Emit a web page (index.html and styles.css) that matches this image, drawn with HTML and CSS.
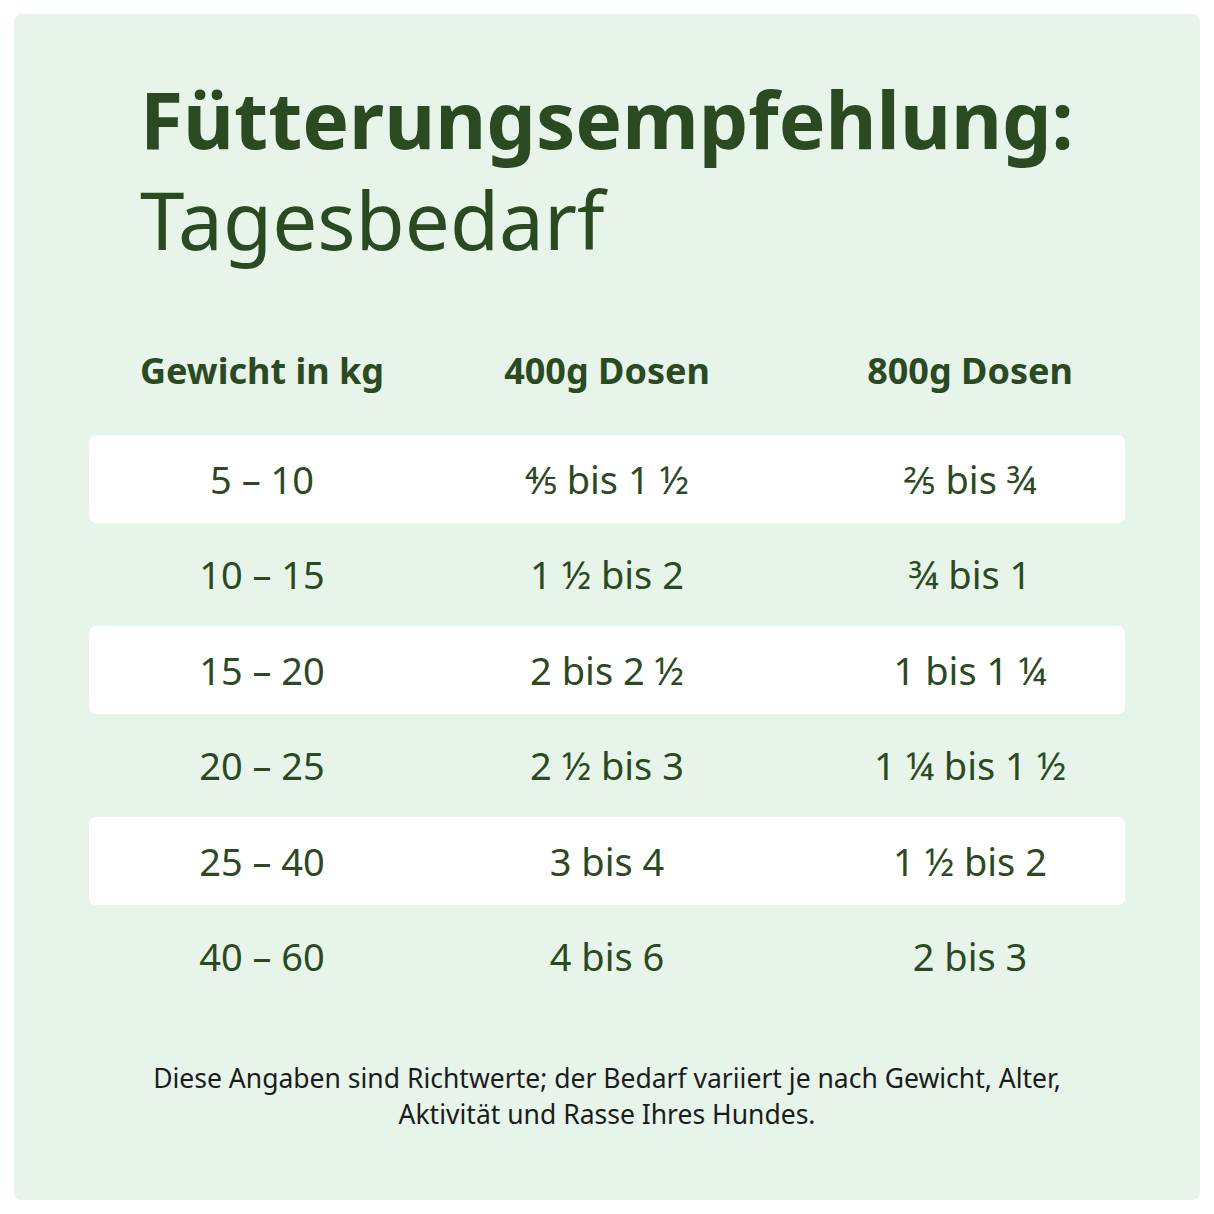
FILE: index.html
```html
<!DOCTYPE html>
<html lang="de">
<head>
<meta charset="utf-8">
<title>Fütterungsempfehlung</title>
<link rel="stylesheet" href="styles.css">
</head>
<body>
<div class="card">
  <h1 class="title"><span class="title-bold">Fütterungsempfehlung:</span><span class="title-light">Tagesbedarf</span></h1>
  <div class="table">
    <div class="row head">
      <div class="cell c1">Gewicht in kg</div>
      <div class="cell c2">400g Dosen</div>
      <div class="cell c3">800g Dosen</div>
    </div>
    <div class="row band">
      <div class="cell c1">5 – 10</div>
      <div class="cell c2">⅘ bis 1 ½</div>
      <div class="cell c3">⅖ bis ¾</div>
    </div>
    <div class="row">
      <div class="cell c1">10 – 15</div>
      <div class="cell c2">1 ½ bis 2</div>
      <div class="cell c3">¾ bis 1</div>
    </div>
    <div class="row band">
      <div class="cell c1">15 – 20</div>
      <div class="cell c2">2 bis 2 ½</div>
      <div class="cell c3">1 bis 1 ¼</div>
    </div>
    <div class="row">
      <div class="cell c1">20 – 25</div>
      <div class="cell c2">2 ½ bis 3</div>
      <div class="cell c3">1 ¼ bis 1 ½</div>
    </div>
    <div class="row band">
      <div class="cell c1">25 – 40</div>
      <div class="cell c2">3 bis 4</div>
      <div class="cell c3">1 ½ bis 2</div>
    </div>
    <div class="row">
      <div class="cell c1">40 – 60</div>
      <div class="cell c2">4 bis 6</div>
      <div class="cell c3">2 bis 3</div>
    </div>
  </div>
  <div class="note">
    <p class="note-line">Diese Angaben sind Richtwerte; der Bedarf variiert je nach Gewicht, Alter,</p>
    <p class="note-line">Aktivität und Rasse Ihres Hundes.</p>
  </div>
</div>
</body>
</html>
```
FILE: styles.css
```css
html, body {
  margin: 0;
  padding: 0;
  background: #ffffff;
}
body {
  font-family: "Noto Sans", "DejaVu Sans", sans-serif;
  color: #2b4a22;
  font-variant-ligatures: none;
}
.card {
  margin: 14px;
  width: 1186px;
  height: 1186px;
  box-sizing: border-box;
  background: #e6f4ea;
  border-radius: 8px;
  padding: 55px 0 0 0;
}
.title {
  margin: 0 0 0 126px;
  font-size: 80px;
  line-height: 100px;
  font-weight: normal;
  color: #2b4a22;
}
.title-bold {
  display: block;
  font-size: 78.5px;
  font-weight: 700;
}
.title-light {
  display: block;
  font-weight: 400;
}
.table {
  margin: 61px 0 0 75px;
  width: 1036px;
  display: flex;
  flex-direction: column;
  gap: 7.5px;
}
.row {
  display: grid;
  grid-template-columns: 346px 344px 346px;
  height: 88px;
  align-items: center;
  font-size: 38px;
  border-radius: 7px;
}
.row.band {
  background: #ffffff;
}
.row.head {
  font-size: 36px;
  font-weight: 700;
  height: 80px;
  margin-bottom: 17px;
}
.cell {
  text-align: center;
}
.c3 {
  padding-left: 36px;
}
.note {
  margin: 60px 0 0 0;
  display: flex;
  flex-direction: column;
  align-items: center;
}
.note-line {
  margin: 0;
  font-size: 26.5px;
  line-height: 36px;
  color: #1c1c1c;
  text-align: center;
}
```
